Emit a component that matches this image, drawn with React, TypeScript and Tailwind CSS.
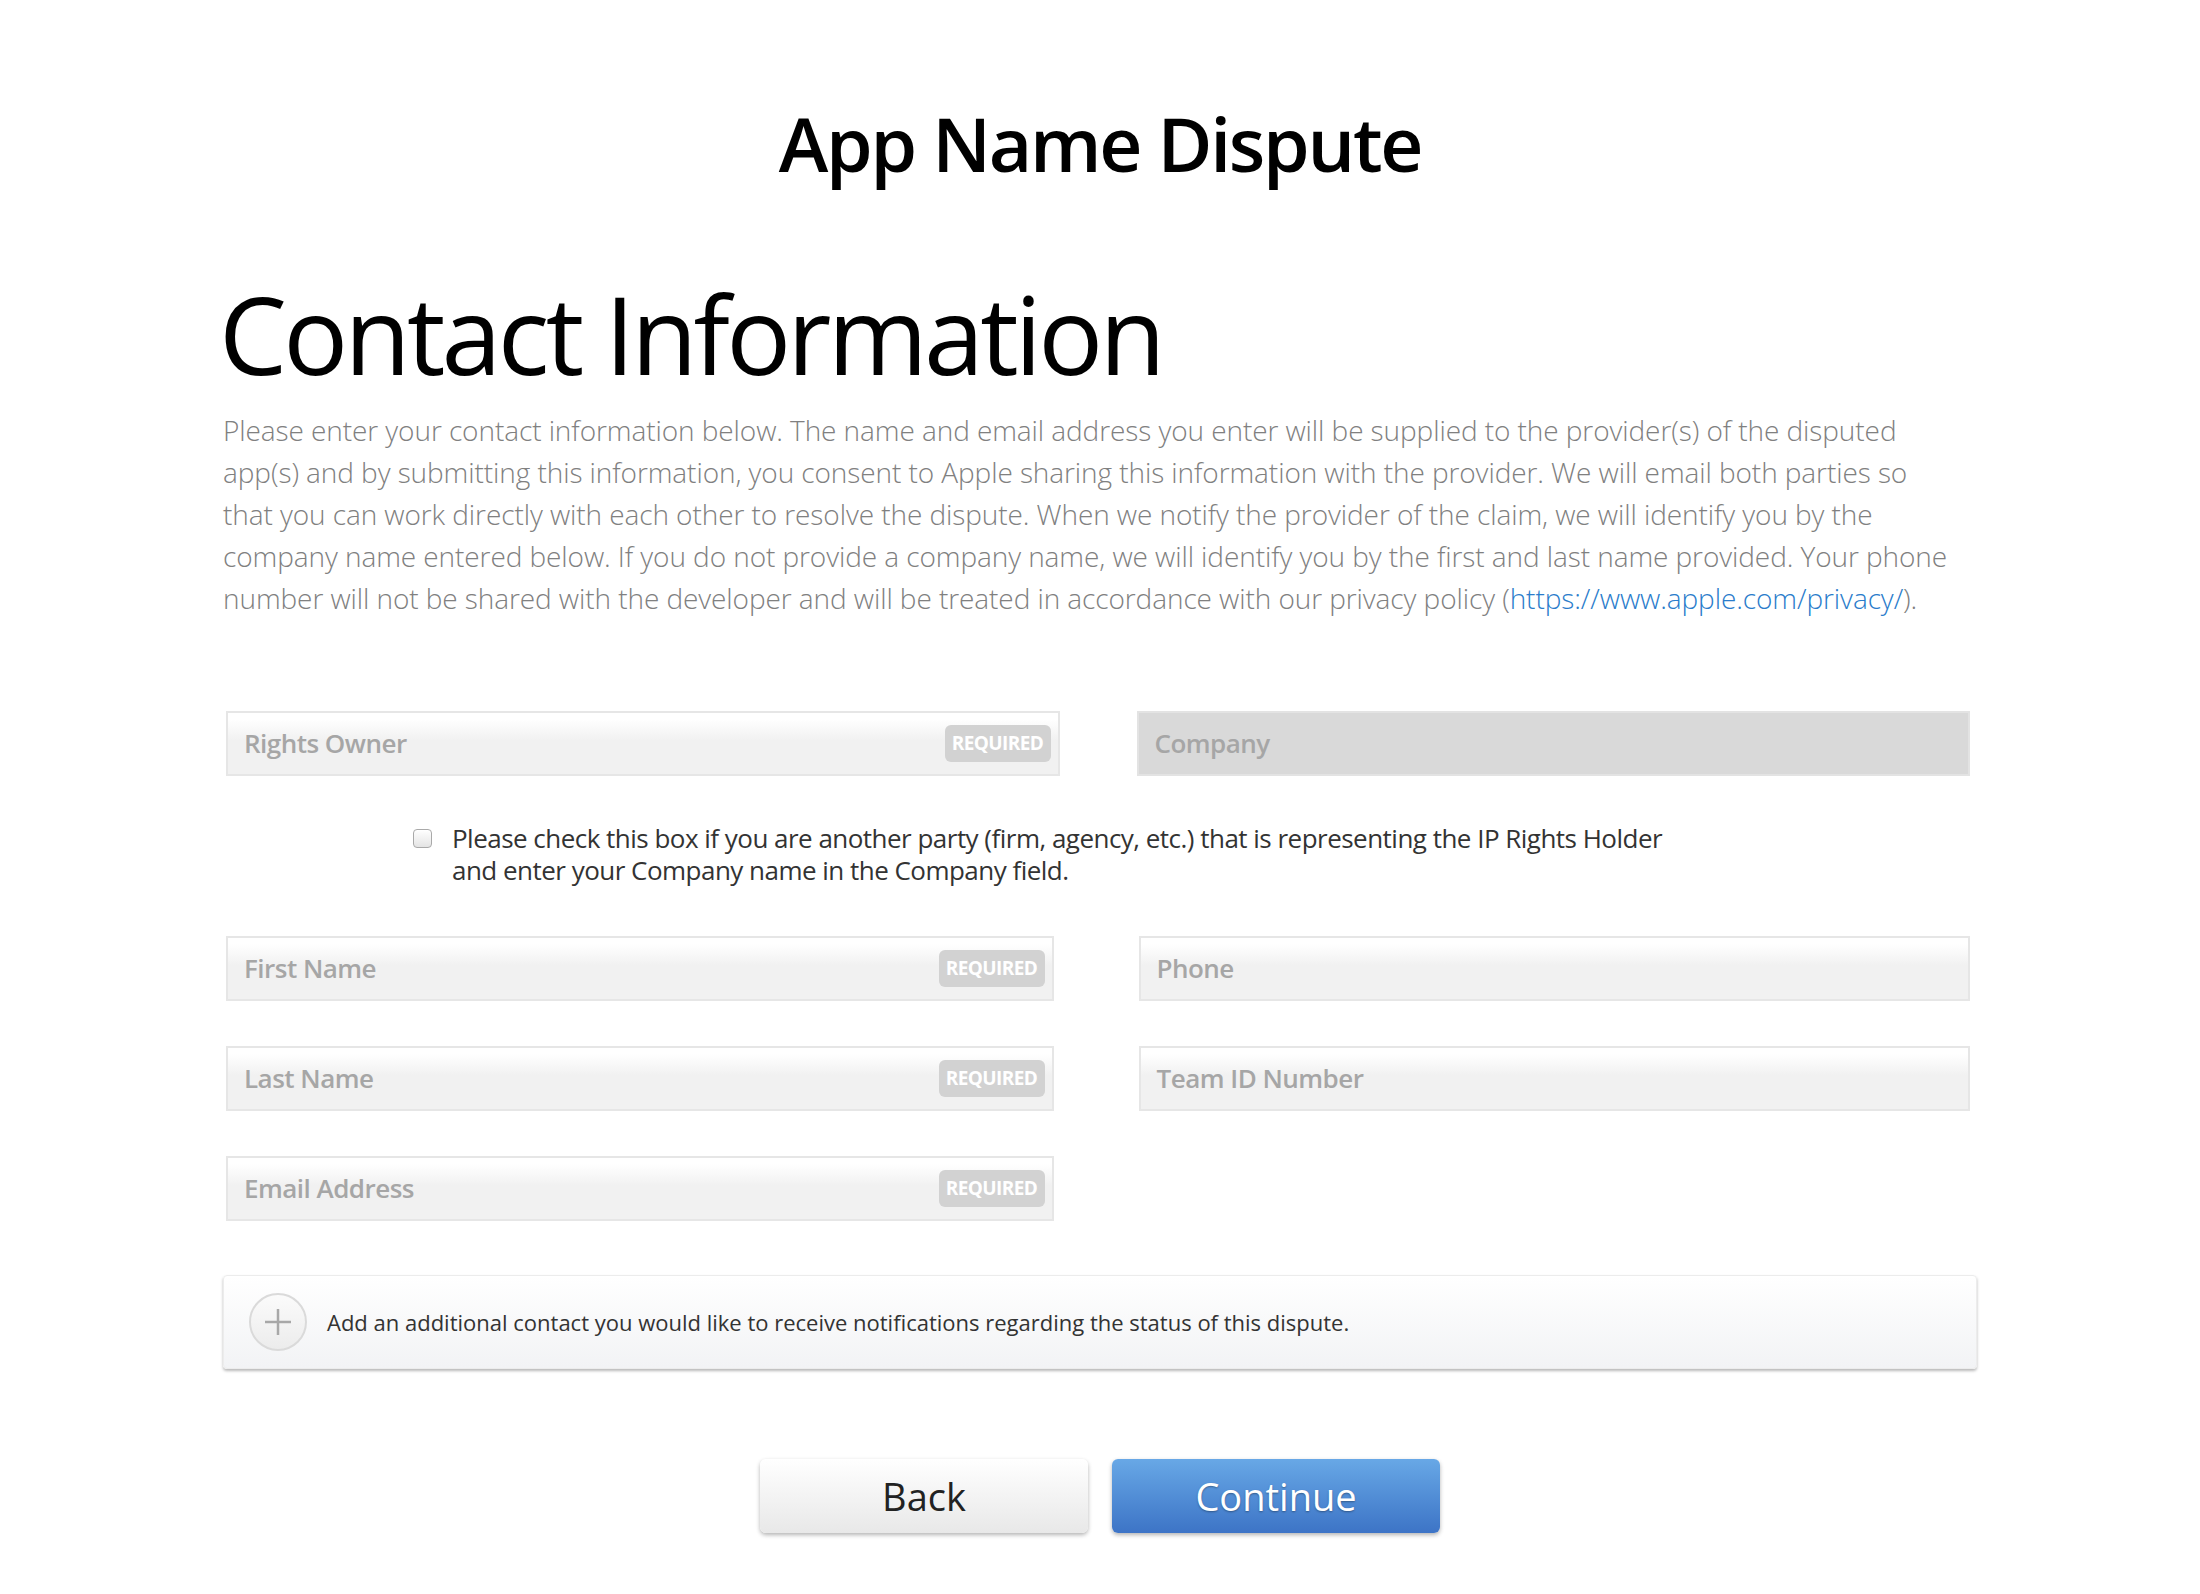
import React from "react";

const leftFields = [
  { label: "First Name", required: true },
  { label: "Last Name", required: true },
  { label: "Email Address", required: true },
];

const rightFields = [{ label: "Phone" }, { label: "Team ID Number" }];

function Field({ label, required, disabled }: { label: string; required?: boolean; disabled?: boolean }) {
  return (
    <div
      className={`flex items-center justify-between h-[65px] border-2 pl-[16px] pr-[7px] ${
        disabled
          ? "bg-[#d9d9d9] border-[#e3e3e3]"
          : "bg-gradient-to-b from-white from-[10%] to-[#f1f1f1] to-[45%] border-[#e6e6e6]"
      }`}
    >
      <span className="text-[26px] font-semibold text-[#a6a6a6] tracking-[-0.02em]">{label}</span>
      {required && (
        <span className="w-[106px] h-[37px] flex items-center justify-center rounded-[6px] bg-[#d2d2d2] text-white text-[19px] font-bold tracking-[-0.03em]">
          REQUIRED
        </span>
      )}
    </div>
  );
}

export default function App() {
  return (
    <div className="min-h-screen bg-white font-['Open_Sans',sans-serif]">
      <div className="w-[1754px] mx-auto pt-[88px] pb-[60px]">
        <h1 className="text-center text-[75px] leading-[110px] font-semibold tracking-[-0.03em] text-black">
          App Name Dispute
        </h1>

        <h2 className="mt-[62px] text-[108px] leading-[148px] font-normal tracking-[-0.035em] text-black -ml-[4px]">
          Contact Information
        </h2>

        <p className="mt-[1px] text-[28px] leading-[42px] font-light text-[#808080] tracking-[-0.003em]">
          Please enter your contact information below. The name and email address you enter will be supplied to the provider(s) of the disputed
          <br />
          app(s) and by submitting this information, you consent to Apple sharing this information with the provider. We will email both parties so
          <br />
          that you can work directly with each other to resolve the dispute. When we notify the provider of the claim, we will identify you by the
          <br />
          company name entered below. If you do not provide a company name, we will identify you by the first and last name provided. Your phone
          <br />
          number will not be shared with the developer and will be treated in accordance with our privacy policy (
          <a href="#" className="text-[#2a7ccb]">https://www.apple.com/privacy/</a>).
        </p>

        <div className="mt-[92px] pl-[3px] pr-[7px] grid grid-cols-2 gap-x-[77px]">
          <Field label="Rights Owner" required />
          <Field label="Company" disabled />
        </div>

        <div className="mt-[46px] pl-[190px] flex items-start gap-[20px]">
          <span className="mt-[7px] w-[19px] h-[19px] shrink-0 rounded-[4px] border border-[#a9a9a9] bg-gradient-to-b from-white to-[#e4e4e4] shadow-[inset_0_1px_1px_rgba(255,255,255,0.8)]" />
          <p className="text-[26px] leading-[32px] text-[#333] tracking-[-0.02em]">
            Please check this box if you are another party (firm, agency, etc.) that is representing the IP Rights Holder
            <br />
            and enter your Company name in the Company field.
          </p>
        </div>

        <div className="mt-[50px] pl-[3px] pr-[7px] grid grid-cols-2 gap-x-[81px]">
          <div className="flex flex-col gap-[45px] pr-[4px]">
            {leftFields.map((f) => (
              <Field key={f.label} label={f.label} required={f.required} />
            ))}
          </div>
          <div className="flex flex-col gap-[45px]">
            {rightFields.map((f) => (
              <Field key={f.label} label={f.label} />
            ))}
          </div>
        </div>

        <div className="mt-[54px] h-[94px] flex items-center gap-[20px] pl-[25px] rounded-[4px] border border-[#ececec] bg-gradient-to-b from-white to-[#f2f3f5] shadow-[0_2px_3px_rgba(0,0,0,0.28)]">
          <span className="w-[58px] h-[58px] rounded-full border-2 border-[#dadada] bg-gradient-to-b from-[#fbfbfb] to-[#ececec] flex items-center justify-center">
            <svg width="30" height="30" viewBox="0 0 30 30">
              <line x1="15" y1="2" x2="15" y2="28" stroke="#a8a8a8" strokeWidth="2.5" />
              <line x1="2" y1="15" x2="28" y2="15" stroke="#a8a8a8" strokeWidth="2.5" />
            </svg>
          </span>
          <span className="text-[22px] text-[#333]">
            Add an additional contact you would like to receive notifications regarding the status of this dispute.
          </span>
        </div>

        <div className="mt-[90px] flex justify-center gap-[24px]">
          <button className="w-[328px] h-[74px] rounded-[6px] bg-gradient-to-b from-white to-[#e8e8e8] shadow-[0_2px_4px_rgba(0,0,0,0.3)] text-[38px] font-normal text-[#222]">
            Back
          </button>
          <button className="w-[328px] h-[74px] rounded-[6px] bg-gradient-to-b from-[#68a8e6] to-[#3d74c6] shadow-[0_2px_4px_rgba(0,0,0,0.3)] text-[38px] font-normal text-white [text-shadow:0_1px_2px_rgba(0,0,0,0.35)]">
            Continue
          </button>
        </div>
      </div>
    </div>
  );
}
